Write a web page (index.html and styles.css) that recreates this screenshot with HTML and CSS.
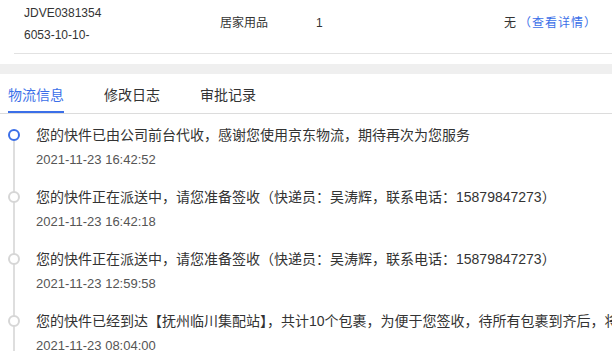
FILE: index.html
```html
<!DOCTYPE html>
<html lang="zh">
<head>
<meta charset="utf-8">
<link rel="stylesheet" href="styles.css">
</head>
<body>
<div class="order">
  <div class="order-row">
    <div class="cell cell-no">
      <div>JDVE0381354</div>
      <div>6053-10-10-</div>
    </div>
    <div class="cell cell-cat">居家用品</div>
    <div class="cell cell-qty">1</div>
    <div class="cell cell-op"><span class="none">无</span><a class="link">（查看详情）</a></div>
  </div>
</div>
<div class="band"></div>
<div class="tabs">
  <div class="tab active">物流信息</div>
  <div class="tab">修改日志</div>
  <div class="tab">审批记录</div>
</div>
<ul class="timeline">
  <li class="item current">
    <div class="title">您的快件已由公司前台代收，感谢您使用京东物流，期待再次为您服务</div>
    <div class="time">2021-11-23 16:42:52</div>
  </li>
  <li class="item">
    <div class="title">您的快件正在派送中，请您准备签收（快递员：吴涛辉，联系电话：15879847273）</div>
    <div class="time">2021-11-23 16:42:18</div>
  </li>
  <li class="item">
    <div class="title">您的快件正在派送中，请您准备签收（快递员：吴涛辉，联系电话：15879847273）</div>
    <div class="time">2021-11-23 12:59:58</div>
  </li>
  <li class="item">
    <div class="title">您的快件已经到达【抚州临川集配站】，共计10个包裹，为便于您签收，待所有包裹到齐后，将为您派送</div>
    <div class="time">2021-11-23 08:04:00</div>
  </li>
</ul>
</body>
</html>
```
FILE: styles.css
```css
html, body {
  margin: 0;
  padding: 0;
  background: #fff;
  overflow: hidden;
}
body {
  width: 612px;
  height: 351px;
  font-family: "Liberation Sans", "Noto Sans CJK SC", sans-serif;
  color: #333;
}
.order {
  padding: 0 0 10px 14px;
}
.order-row {
  display: flex;
  align-items: flex-start;
  padding-top: 2px;
  height: 51px;
  border-bottom: 1px solid #e2e2e2;
  font-size: 12px;
  line-height: 22px;
}
.cell {
  padding-top: 10px;
}
.cell-no {
  width: 196px;
  padding-left: 10px;
  padding-top: 0;
}
.cell-cat {
  width: 96px;
}
.cell-qty {
  width: 80px;
}
.cell-op {
  flex: 1;
  text-align: right;
  padding-right: 15px;
}
.none {
  margin-right: 3px;
}
.link {
  color: #3b6fe8;
  cursor: pointer;
  letter-spacing: 1px;
}
.band {
  height: 10px;
  background: #efefef;
}
.tabs {
  display: flex;
  gap: 40px;
  padding-left: 8px;
  border-bottom: 1px solid #dcdcdc;
  font-size: 14px;
}
.tab {
  height: 37px;
  line-height: 42px;
  border-bottom: 2px solid transparent;
  color: #333;
}
.tab.active {
  color: #3b6fe8;
  border-bottom-color: #3b6fe8;
}
.timeline {
  list-style: none;
  margin: 0;
  padding: 11px 0 0 0;
}
.item {
  position: relative;
  height: 62px;
  padding-left: 36px;
}
.item::before {
  content: "";
  position: absolute;
  left: 13px;
  top: 10px;
  width: 2px;
  height: 62px;
  background: #dedede;
}
.item::after {
  content: "";
  position: absolute;
  left: 8px;
  top: 4px;
  width: 8px;
  height: 8px;
  border: 2px solid #d6d6d6;
  border-radius: 50%;
  background: #fff;
}
.item.current::after {
  border-color: #3b6fe8;
}
.title {
  font-size: 14px;
  line-height: 20px;
  white-space: nowrap;
  color: #333;
}
.time {
  margin-top: 5px;
  font-size: 13px;
  line-height: 20px;
  color: #555;
}
```
